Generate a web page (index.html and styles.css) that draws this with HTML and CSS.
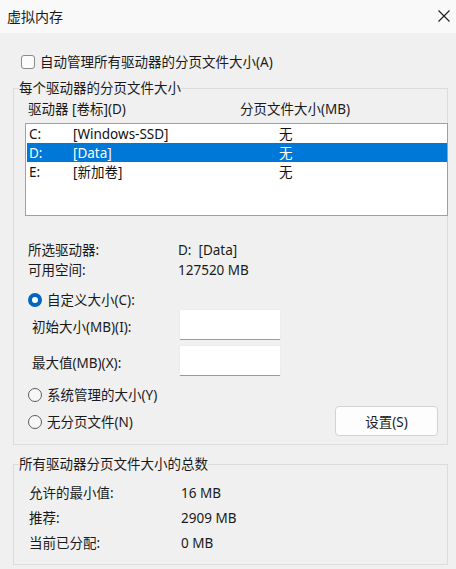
FILE: index.html
```html
<!DOCTYPE html>
<html lang="zh-CN">
<head>
<meta charset="utf-8">
<title>虚拟内存</title>
<link rel="stylesheet" href="styles.css">
</head>
<body>
<div class="titlebar">
  <span class="title">虚拟内存</span>
  <svg class="close" width="14" height="14" viewBox="0 0 14 14"><path d="M1.5 1.5 L12.5 12.5 M12.5 1.5 L1.5 12.5" stroke="#1a1a1a" stroke-width="1.1" fill="none"/></svg>
</div>
<div class="content">
  <div class="check-row"><span class="checkbox"></span><span>自动管理所有驱动器的分页文件大小(A)</span></div>

  <fieldset class="group g1">
    <legend>每个驱动器的分页文件大小</legend>
    <div class="list-header"><span class="h-drive">驱动器 [卷标](D)</span><span>分页文件大小(MB)</span></div>
    <div class="listbox">
      <div class="row"><span class="c1">C:</span><span class="c2">[Windows-SSD]</span><span>无</span></div>
      <div class="row selected"><span class="c1">D:</span><span class="c2">[Data]</span><span>无</span></div>
      <div class="row"><span class="c1">E:</span><span class="c2">[新加卷]</span><span>无</span></div>
    </div>
    <div class="info">
      <div class="info-row"><span class="info-label">所选驱动器:</span><span>D:&nbsp;&nbsp;[Data]</span></div>
      <div class="info-row"><span class="info-label">可用空间:</span><span>127520 MB</span></div>
    </div>
    <div class="radio-row custom"><span class="radio on"></span><span>自定义大小(C):</span></div>
    <div class="field-row"><span class="field-label">初始大小(MB)(I):</span><span class="input"></span></div>
    <div class="field-row second"><span class="field-label">最大值(MB)(X):</span><span class="input"></span></div>
    <div class="radio-row system"><span class="radio"></span><span>系统管理的大小(Y)</span></div>
    <div class="last-row">
      <div class="radio-row"><span class="radio"></span><span>无分页文件(N)</span></div>
      <button class="btn">设置(S)</button>
    </div>
  </fieldset>

  <fieldset class="group g2">
    <legend>所有驱动器分页文件大小的总数</legend>
    <div class="total-row"><span class="total-label">允许的最小值:</span><span>16 MB</span></div>
    <div class="total-row"><span class="total-label">推荐:</span><span>2909 MB</span></div>
    <div class="total-row"><span class="total-label">当前已分配:</span><span>0 MB</span></div>
  </fieldset>
</div>
</body>
</html>
```

FILE: styles.css
```css
* { box-sizing: border-box; }
html, body {
  margin: 0;
  padding: 0;
}
body {
  width: 456px;
  height: 569px;
  overflow: hidden;
  background: #f0f0f0;
  color: #1a1a1a;
  font-family: "Noto Sans", "Noto Sans CJK SC", sans-serif;
  font-size: 13.5px;
  line-height: 18px;
}
.titlebar {
  height: 33px;
  background: #f9f9f9;
  display: flex;
  align-items: center;
  justify-content: space-between;
  padding: 0 5px 0 7px;
}
.title {
  font-size: 14px;
  color: #1a1a1a;
}
.close { display: block; margin-top: -1px; }

.content {
  padding: 19px 8px 0 13px;
}
.check-row {
  height: 20px;
  display: flex;
  align-items: center;
  padding-left: 8px;
}
.checkbox {
  width: 14px;
  height: 14px;
  border: 1px solid #8a8a8a;
  border-radius: 3px;
  background: #fbfbfb;
  margin-right: 5px;
}

.group {
  margin: 7px 0 0 0;
  padding: 0;
  border: 1px solid #dcdcdc;
  min-width: 0;
}
.group legend {
  padding: 0;
  margin-left: 5px;
  line-height: 18px;
  color: #1a1a1a;
}
.g1 { padding-bottom: 8px; }

.list-header {
  display: flex;
  height: 18px;
  margin-top: 3px;
  padding-left: 14px;
}
.h-drive { width: 212px; }

.listbox {
  margin: 5px -1px 0 11px;
  height: 93px;
  border: 1px solid #a0a0a0;
  background: #fff;
  padding: 0 0 0 1px;
}
.row {
  height: 19px;
  display: flex;
  align-items: center;
  padding-left: 2px;
  color: #111;
}
.row.selected {
  background: #0078d7;
  color: #fff;
}
.c1 { width: 44px; }
.c2 { width: 206px; }

.info {
  margin-top: 24px;
  padding-left: 14px;
}
.info-row {
  height: 20px;
  display: flex;
  align-items: center;
}
.info-label { width: 150px; }

.radio-row {
  height: 20px;
  display: flex;
  align-items: center;
  padding-left: 14px;
}
.radio-row.custom { margin-top: 10px; }
.radio-row.system { margin-top: 9px; }
.radio {
  width: 14px;
  height: 14px;
  border-radius: 50%;
  border: 1px solid #5c5c5c;
  background: #f7f7f7;
  margin-right: 5px;
}
.radio.on {
  border: 4px solid #0067c0;
  background: #fff;
}

.field-row {
  height: 31px;
  display: flex;
  align-items: center;
  padding-left: 18px;
  margin-top: -1px;
}
.field-row.second { margin-top: 5px; }
.field-label {
  width: 147px;
  padding-top: 4px;
}
.input {
  width: 102px;
  height: 31px;
  background: #fff;
  border: 1px solid #ececec;
  border-bottom: 1px solid #9a9a9a;
  border-radius: 2px;
}

.last-row {
  height: 30px;
  margin-top: 1px;
  display: flex;
  align-items: center;
  justify-content: space-between;
  padding-right: 9px;
}
.last-row .radio-row { padding-top: 2px; }
.btn {
  width: 103px;
  height: 30px;
  border: 1px solid #d3d3d3;
  border-radius: 4px;
  background: #fdfdfd;
  font-family: inherit;
  font-size: 13.5px;
  color: #1a1a1a;
  padding: 0;
}

.g2 {
  margin-top: 10px;
  padding: 7px 0 9px 0;
}
.total-row {
  height: 25px;
  display: flex;
  align-items: center;
  padding-left: 15px;
}
.total-label { width: 152px; }
```
